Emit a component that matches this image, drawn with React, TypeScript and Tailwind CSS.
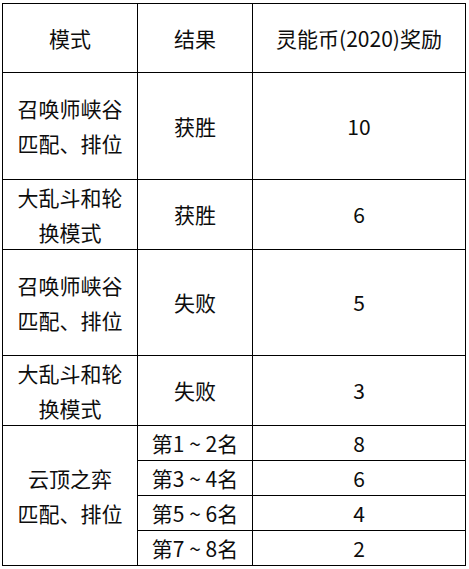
import React from "react"

const rows = [
  { mode: ["召唤师峡谷", "匹配、排位"], result: "获胜", reward: "10", h: "h-[106px]" },
  { mode: ["大乱斗和轮", "换模式"], result: "获胜", reward: "6", h: "h-[69px]" },
  { mode: ["召唤师峡谷", "匹配、排位"], result: "失败", reward: "5", h: "h-[105px]" },
  { mode: ["大乱斗和轮", "换模式"], result: "失败", reward: "3", h: "h-[69px]" },
]

const tft = [
  { rank: "第1 ~ 2名", reward: "8" },
  { rank: "第3 ~ 4名", reward: "6" },
  { rank: "第5 ~ 6名", reward: "4" },
  { rank: "第7 ~ 8名", reward: "2" },
]

function Cell({ children, className = "" }: { children: React.ReactNode; className?: string }) {
  return <div className={"bg-white flex flex-col items-center justify-center text-center " + className}>{children}</div>
}

export default function App() {
  return (
    <div
      className="w-[469px] h-[569px] bg-white pt-[3px] pl-[2px] text-[21px] leading-[35px] text-[#0d0d0d]"
      style={{ fontFamily: '"Noto Sans CJK SC", "Noto Sans", sans-serif' }}
    >
      <div className="inline-grid grid-cols-[134px_114px_212px] gap-[1px] p-[1px] bg-black">
        {/* header */}
        <Cell className="h-[68px]">模式</Cell>
        <Cell className="h-[68px]">结果</Cell>
        <Cell className="h-[68px]">灵能币(2020)奖励</Cell>

        {rows.map((r, i) => (
          <React.Fragment key={i}>
            <Cell className={r.h}>
              {r.mode.map((m) => (
                <span key={m}>{m}</span>
              ))}
            </Cell>
            <Cell className={r.h}>{r.result}</Cell>
            <Cell className={r.h}>{r.reward}</Cell>
          </React.Fragment>
        ))}

        {/* 云顶之弈 block */}
        <Cell className="row-span-4">
          <span>云顶之弈</span>
          <span>匹配、排位</span>
        </Cell>
        {tft.map((t) => (
          <React.Fragment key={t.rank}>
            <Cell className="h-[34px] whitespace-pre">{t.rank}</Cell>
            <Cell className="h-[34px]">{t.reward}</Cell>
          </React.Fragment>
        ))}
      </div>
    </div>
  )
}
